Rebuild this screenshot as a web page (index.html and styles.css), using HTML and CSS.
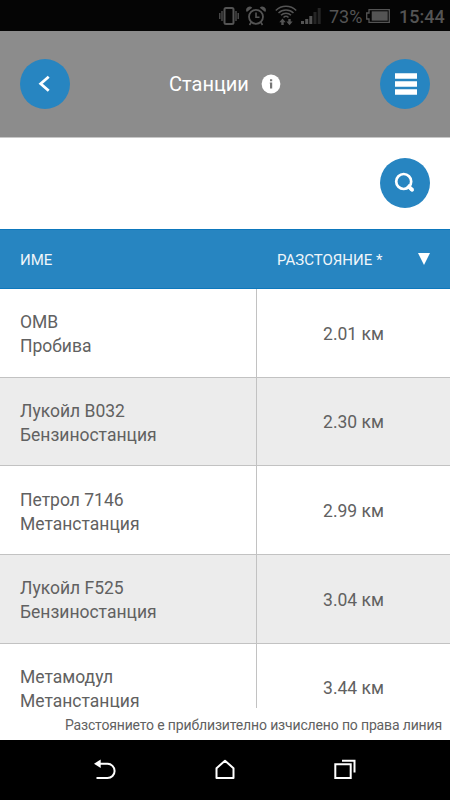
FILE: index.html
```html
<!DOCTYPE html>
<html lang="bg">
<head>
  <meta charset="UTF-8">
  <meta name="viewport" content="width=device-width, initial-scale=1">
  <title>Станции</title>
  <link rel="stylesheet" href="styles.css">
</head>
<body>
  <div class="status-bar">
    <svg class="vibrate" width="20" height="20" viewBox="0 0 20 20" fill="none" stroke="currentColor">
      <rect x="5.5" y="2" width="9" height="16" rx="1.5" stroke-width="2"/>
      <path d="M3 5v10M17 5v10M.8 7v6M19.2 7v6" stroke-width="1.3"/>
    </svg>
    <svg class="alarm" width="20" height="20" viewBox="0 0 20 20" fill="none" stroke="currentColor">
      <circle cx="10" cy="10.8" r="7" stroke-width="1.8"/>
      <path d="M10 6.500v4.800h3.500M5 16.500l-1.500 2.500M15 16.500l1.500 2.500" stroke-width="1.6"/>
      <path d="M.8 6a3.500 3.500 0 0 1 5.500-4.300zM19.200 6a3.500 3.500 0 0 0-5.500-4.300z" fill="currentColor" stroke="none"/>
    </svg>
    <svg class="wifi" width="22" height="21" viewBox="0 0 22 21" fill="none" stroke="currentColor">
      <path d="M.8 5.500a14.500 14.500 0 0 1 20.400 0M3.500 8a10.700 10.700 0 0 1 15 0M6 10.300a7 7 0 0 1 10 0M8.500 12.500a3.600 3.600 0 0 1 5 0" stroke-width="1.500"/>
      <path d="M4.300 17.200 7.500 13.500l3.200 3.700H8.700V20H6.300v-2.800zM11.300 16.500h2V14h2.400v2.500h2L14.500 20.200z" fill="currentColor" stroke="none"/>
    </svg>
    <svg class="signal" width="20" height="16" viewBox="0 0 20 16" fill="currentColor">
      <path d="M0 13h3v3H0zM4.200 11h3v5h-3zM8.300 8h3v8h-3z"/>
      <path d="M12.500 4h3v12h-3zM16.700 0h3v16h-3z" opacity=".4"/>
    </svg>
    <span class="percent">73%</span>
    <svg class="battery" width="24" height="14" viewBox="0 0 24 14" fill="none" stroke="currentColor">
      <path d="M3 .7h20.300v12.600H3V10H.7V4H3z" stroke-width="1.300"/>
      <path d="M5.700 2.300h16v9.400h-16z" fill="currentColor" stroke="none"/>
    </svg>
    <span class="clock">15:44</span>
  </div>

  <header class="header">
    <button class="round-btn" aria-label="Назад">
      <svg width="50" height="50" viewBox="0 0 50 50" fill="none" stroke="#fff" stroke-width="2.800">
        <path d="M28.700 17.700 20.700 24.700 28.700 31.700"/>
      </svg>
    </button>
    <h1 class="title">
      Станции
      <svg width="20" height="20" viewBox="0 0 20 20">
        <circle cx="10" cy="10" r="9.400" fill="#fff"/>
        <path d="M9 5.300h2.200v2H9zM8.800 8.500h2.400v6H9V9.700h-.2z" fill="#777"/>
      </svg>
    </h1>
    <button class="round-btn" aria-label="Меню">
      <svg width="50" height="50" viewBox="0 0 50 50" fill="#fff">
        <path d="M15 14.200h22v5.600H15zM15 22.200h22v5.600H15zM15 30.200h22v5.600H15z"/>
      </svg>
    </button>
  </header>

  <div class="search-bar">
    <button class="round-btn" aria-label="Търсене">
      <svg width="50" height="50" viewBox="0 0 50 50" fill="none" stroke="#fff">
        <circle cx="23.700" cy="23.500" r="7.500" stroke-width="2.700"/>
        <path d="M27.500 27.500 32.500 32.200" stroke-width="3.800"/>
        <path d="M31.500 31.300 32.300 32" stroke-width="3.400" stroke-linecap="round"/>
      </svg>
    </button>
  </div>

  <div class="table-head">
    <div>ИМЕ</div>
    <div class="sort">
      РАЗСТОЯНИЕ *
      <svg width="12" height="12" viewBox="0 0 12 12"><path d="M0 0h12L6 12z" fill="#fff"/></svg>
    </div>
  </div>

  <main class="stations">
    <div class="row">
      <div class="name">OMB<br>Пробива</div>
      <div class="distance">2.01 км</div>
    </div>
    <div class="row">
      <div class="name">Лукойл B032<br>Бензиностанция</div>
      <div class="distance">2.30 км</div>
    </div>
    <div class="row">
      <div class="name">Петрол 7146<br>Метанстанция</div>
      <div class="distance">2.99 км</div>
    </div>
    <div class="row">
      <div class="name">Лукойл F525<br>Бензиностанция</div>
      <div class="distance">3.04 км</div>
    </div>
    <div class="row">
      <div class="name">Метамодул<br>Метанстанция</div>
      <div class="distance">3.44 км</div>
    </div>
  </main>

  <footer class="note">Разстоянието е приблизително изчислено по права линия</footer>

  <nav class="nav-bar">
    <svg width="22" height="22" viewBox="0 0 22 22" fill="none" stroke="#fff" stroke-width="2">
      <path d="M5 4.800h8.500a7 7 0 0 1 0 14.200H2.500"/>
      <path d="M0 4.800 6.700.6v8.400z" fill="#fff" stroke="none"/>
    </svg>
    <svg width="22" height="22" viewBox="0 0 22 22" fill="none" stroke="#fff" stroke-width="2" stroke-linejoin="round">
      <path d="M2.500 19V9.200L11 1.700l8.500 7.500V19z"/>
    </svg>
    <svg width="22" height="22" viewBox="0 0 22 22" fill="none" stroke="#fff" stroke-width="2">
      <path d="M1.300 5.300h15.400V19H1.300z"/>
      <path d="M8 1.800h12.500v11.700"/>
    </svg>
  </nav>
</body>
</html>
```
FILE: styles.css
```css
* {
  box-sizing: border-box;
}
body {
  margin: 0;
  height: 800px;
  display: flex;
  flex-direction: column;
  overflow: hidden;
  background: #fff;
  color: #616161;
  font-family: Roboto, Arial, sans-serif;
}

.status-bar {
  flex: none;
  height: 31px;
  display: flex;
  align-items: center;
  justify-content: flex-end;
  padding-right: 7px;
  background: #050505;
  color: #545454;
  font-size: 18px;
}
.vibrate { margin-right: 7px; }
.alarm { margin-right: 9px; }
.wifi { margin-right: 4px; }
.signal { margin-right: 8px; }
.percent {
  width: 33px;
  margin-right: 4px;
  padding-top: 2px;
}
.clock {
  width: 44px;
  margin-left: 9px;
  padding-top: 2px;
  font-weight: 500;
}

.header {
  flex: none;
  height: 107px;
  display: flex;
  align-items: center;
  justify-content: space-between;
  padding: 0 20px;
  background: #8c8c8c;
  border-bottom: 1px solid #c8c8c8;
}
.title {
  display: flex;
  align-items: center;
  gap: 12px;
  margin: 0;
  color: #fff;
  font-size: 20px;
  font-weight: 400;
}
.round-btn {
  width: 50px;
  height: 50px;
  padding: 0;
  border: none;
  border-radius: 50%;
  background: #2785c1;
}
.round-btn svg {
  display: block;
}

.search-bar {
  flex: none;
  height: 91px;
  display: flex;
  align-items: center;
  justify-content: flex-end;
  padding: 0 20px 1px 0;
}

.table-head {
  flex: none;
  height: 60px;
  display: grid;
  grid-template-columns: 257px 1fr;
  align-items: center;
  background: #2785c1;
  border: solid #0d78bd;
  border-width: 1px 0;
  color: #f0f6fa;
  font-size: 15px;
}
.table-head div {
  padding: 2px 20px 0;
}
.table-head .sort {
  display: flex;
  align-items: center;
  justify-content: space-between;
}
.sort svg {
  margin-top: -3px;
}

.stations {
  flex: 1;
  min-height: 0;
  overflow: hidden;
}
.row {
  height: 88.7px;
  display: grid;
  grid-template-columns: 257px 1fr;
  border-bottom: 1px solid #c2c2c2;
  font-size: 17.5px;
  line-height: 24px;
}
.row:nth-child(even) {
  background: #ececec;
}
.name {
  padding: 21.3px 0 0 20px;
  border-right: 1px solid #c2c2c2;
}
.distance {
  display: flex;
  align-items: center;
  justify-content: center;
  padding-top: 1.5px;
}

.note {
  flex: none;
  height: 32px;
  padding-right: 8px;
  font-size: 14px;
  letter-spacing: -0.15px;
  line-height: 34px;
  text-align: right;
}

.nav-bar {
  flex: none;
  height: 60px;
  display: flex;
  align-items: center;
  justify-content: center;
  gap: 98px;
  background: #000;
}
```
